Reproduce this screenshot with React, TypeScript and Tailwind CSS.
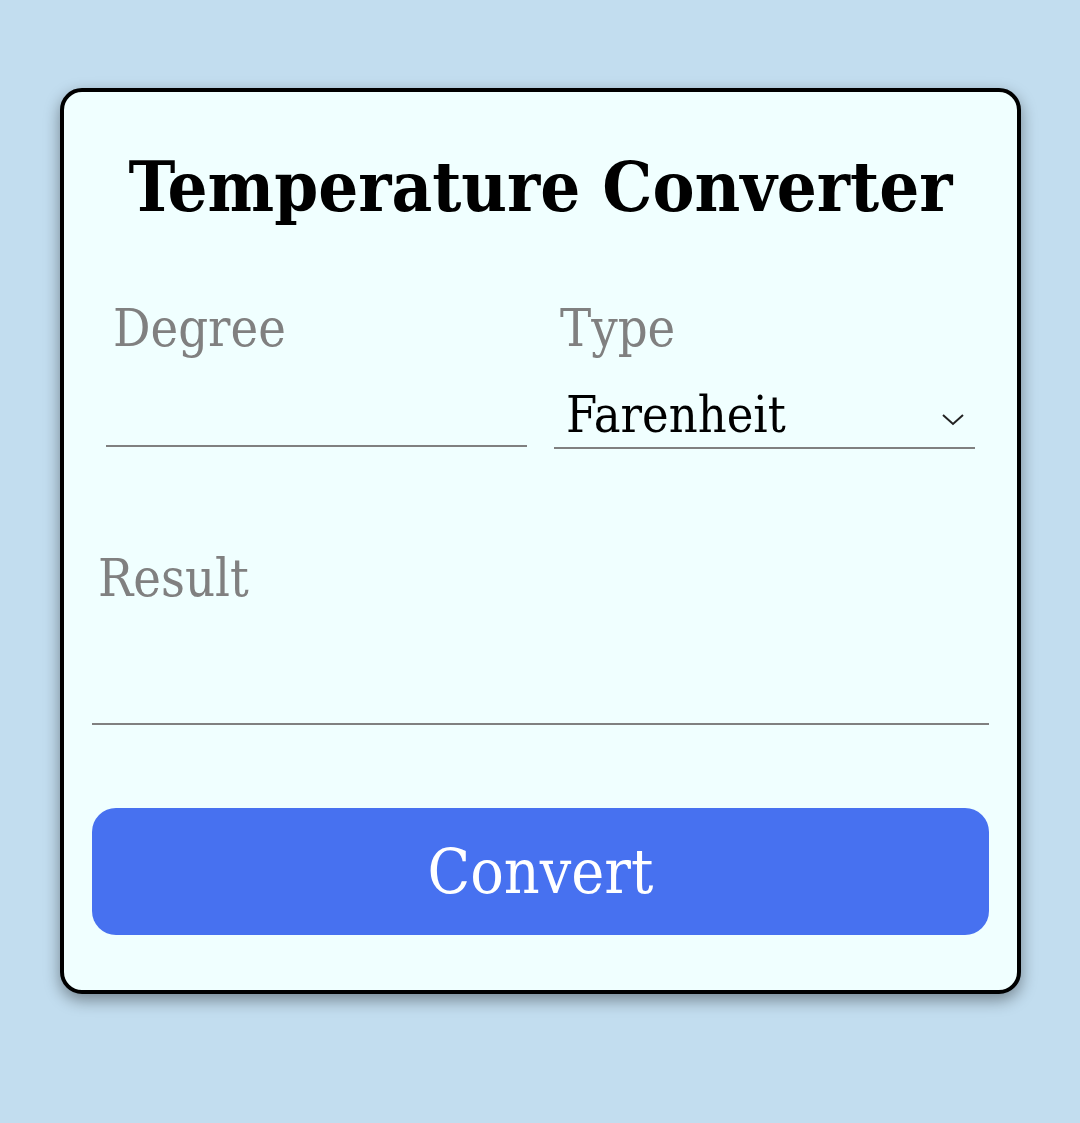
import React from "react";

export default function App() {
  return (
    <div className="min-h-[1123px] w-full bg-[#c2ddef] pt-[88px] pl-[60px] [font-family:'DejaVu_Serif',serif] font-stretch-condensed">
      <div className="w-[961px] h-[906px] rounded-[22px] border-4 border-black bg-[#f0ffff] shadow-[0_6px_16px_rgba(0,0,0,0.4)] px-[28px] flex flex-col">
        <h1 className="mt-[55px] text-center text-[70px] leading-[80px] font-bold text-black">Temperature Converter</h1>
        <div className="mt-[71px] mx-[14px] flex gap-[27px]">
          <div className="flex-1 flex flex-col">
            <label className="pl-[7px] text-[52px] leading-[60px] text-[#808080]">Degree</label>
            <div className="h-[89px] border-b-2 border-[#808080]"></div>
          </div>
          <div className="flex-1 flex flex-col">
            <label className="pl-[6px] text-[52px] leading-[60px] text-[#808080]">Type</label>
            <div className="h-[91px] border-b-2 border-[#808080] flex items-end justify-between pl-[12px] pr-[10px] pb-[4px]">
              <span className="text-[50px] leading-[56px] text-black">Farenheit</span>
              <svg width="24" height="14" viewBox="0 0 24 14" className="mb-[16px]">
                <path d="M2 2 L12 11 L22 2" fill="none" stroke="#222" strokeWidth="2" />
              </svg>
            </div>
          </div>
        </div>
        <div className="mt-[99px] flex flex-col">
          <label className="pl-[6px] text-[52px] leading-[60px] text-[#808080]">Result</label>
          <div className="h-[117px] border-b-2 border-[#808080]"></div>
        </div>
        <button className="mt-[83px] h-[127px] w-full rounded-[24px] bg-[#4771f0] text-white text-[62px] leading-[70px]">
          Convert
        </button>
      </div>
    </div>
  );
}
